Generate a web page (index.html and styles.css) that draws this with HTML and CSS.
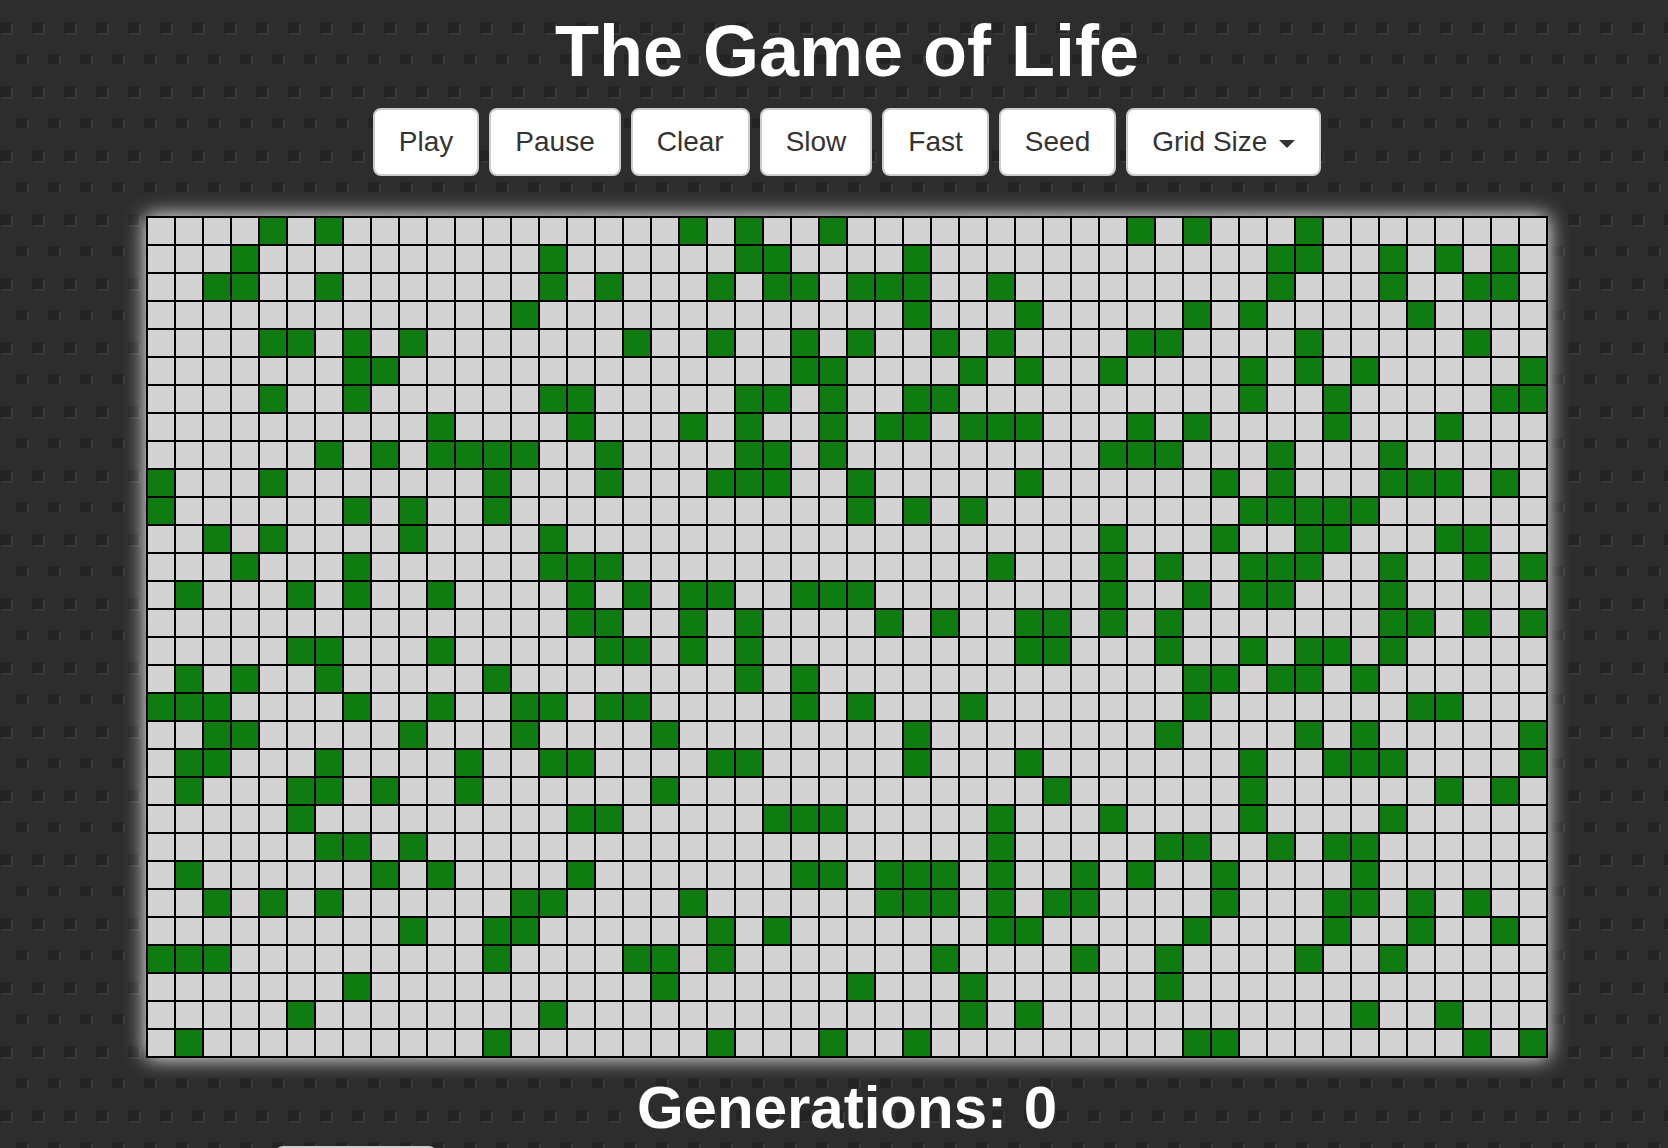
FILE: index.html
```html
<!DOCTYPE html>
<html lang="en">
<head>
<meta charset="utf-8">
<title>The Game of Life</title>
<link rel="stylesheet" href="styles.css">
</head>
<body>
<main class="app">
  <h1 class="title">The Game of Life</h1>
  <div class="controls">
    <button class="btn" type="button">Play</button>
    <button class="btn" type="button">Pause</button>
    <button class="btn" type="button">Clear</button>
    <button class="btn" type="button">Slow</button>
    <button class="btn" type="button">Fast</button>
    <button class="btn" type="button">Seed</button>
    <button class="btn" type="button">Grid Size <span class="caret"></span></button>
  </div>
  <div class="board" id="board"></div>
  <h2 class="generations">Generations: 0</h2>
  <button class="btn btn-footer" type="button" aria-label="More"></button>
</main>
<script src="grid.js"></script>
</body>
</html>
```
FILE: styles.css
```css
html, body {
  margin: 0;
  height: 100%;
  overflow: hidden;
}

body {
  background-color: #2d2d2d;
  background-image: url("data:image/svg+xml,%3Csvg xmlns='http://www.w3.org/2000/svg' width='32' height='64'%3E%3Crect x='2' y='24' width='11' height='11' fill='%23393939'/%3E%3Crect x='0' y='22' width='11' height='11' fill='%23242424'/%3E%3Crect x='18' y='56' width='11' height='11' fill='%23393939'/%3E%3Crect x='16' y='54' width='11' height='11' fill='%23242424'/%3E%3C/svg%3E");
  background-size: 32px 64px;
  font-family: "Liberation Sans", Arial, sans-serif;
  color: #fff;
}

.app {
  display: flex;
  flex-direction: column;
  align-items: center;
  padding-left: 26px;
}

.title {
  margin: 11px 0 17px;
  font-size: 72px;
  line-height: 80px;
  font-weight: 700;
}

.controls {
  display: flex;
  gap: 10px;
}

.btn {
  display: block;
  padding: 12px 24px;
  border: 2px solid #ccc;
  border-radius: 8px;
  background: #fff;
  color: #333;
  font-family: inherit;
  font-size: 28px;
  line-height: 40px;
  height: 68px;
  box-sizing: border-box;
}

.caret {
  display: inline-block;
  width: 0;
  height: 0;
  margin-left: 4px;
  vertical-align: middle;
  border-top: 8px solid #333;
  border-left: 8px solid transparent;
  border-right: 8px solid transparent;
}

.board {
  display: grid;
  grid-template-columns: repeat(50, 28px);
  grid-auto-rows: 28px;
  margin-top: 40px;
  border: 1px solid #000;
  box-shadow: 0 0 20px #fff;
}

.cell {
  border: 1px solid #000;
  background: #d3d3d3;
}

.cell.alive {
  background: #0f7c11;
}

.generations {
  margin: 17px 0 5px;
  font-size: 60px;
  line-height: 66px;
  font-weight: 700;
}

.btn-footer {
  flex: none;
  align-self: flex-start;
  width: 162px;
  margin-left: 249px;
}
```
FILE: grid.js
```js
var ALIVE = [
  [4,6,19,21,24,35,37,41],
  [3,14,21,22,27,40,41,44,46,48],
  [2,3,6,14,16,20,22,23,25,26,27,30,40,44,47,48],
  [13,27,31,37,39,45],
  [4,5,7,9,17,20,23,25,28,30,35,36,41,47],
  [7,8,23,24,29,31,34,39,41,43,49],
  [4,7,14,15,21,22,24,27,28,39,42,48,49],
  [10,15,19,21,24,26,27,29,30,31,35,37,42,46],
  [6,8,10,11,12,13,16,21,22,24,34,35,36,40,44],
  [0,4,12,16,20,21,22,25,31,38,40,44,45,46,48],
  [0,7,9,12,25,27,29,39,40,41,42,43],
  [2,4,9,14,34,38,41,42,46,47],
  [3,7,14,15,16,30,34,36,39,40,41,44,47,49],
  [1,5,7,10,15,17,19,20,23,24,25,34,37,39,40,44],
  [15,16,19,21,26,28,31,32,34,36,44,45,47,49],
  [5,6,10,16,17,19,21,31,32,36,39,41,42,44],
  [1,3,6,12,21,23,37,38,40,41,43],
  [0,1,2,7,10,13,14,16,17,23,25,29,37,45,46],
  [2,3,9,13,18,27,36,41,43,49],
  [1,2,6,11,14,15,20,21,27,31,39,42,43,44,49],
  [1,5,6,8,11,18,32,39,46,48],
  [5,15,16,22,23,24,30,34,39,44],
  [6,7,9,30,36,37,40,42,43],
  [1,8,10,15,23,24,26,27,28,30,33,35,38,43],
  [2,4,6,13,14,19,26,27,28,30,32,33,38,42,43,45,47],
  [9,12,13,20,22,30,31,37,42,45,48],
  [0,1,2,12,17,18,20,28,33,36,41,44],
  [7,18,25,29,36],
  [5,14,29,31,43,46],
  [1,12,20,24,27,37,38,47,49]
];

var board = document.getElementById("board");
ALIVE.forEach(function (row) {
  for (var col = 0; col < 50; col++) {
    var cell = document.createElement("div");
    cell.className = row.indexOf(col) >= 0 ? "cell alive" : "cell";
    board.appendChild(cell);
  }
});
```
